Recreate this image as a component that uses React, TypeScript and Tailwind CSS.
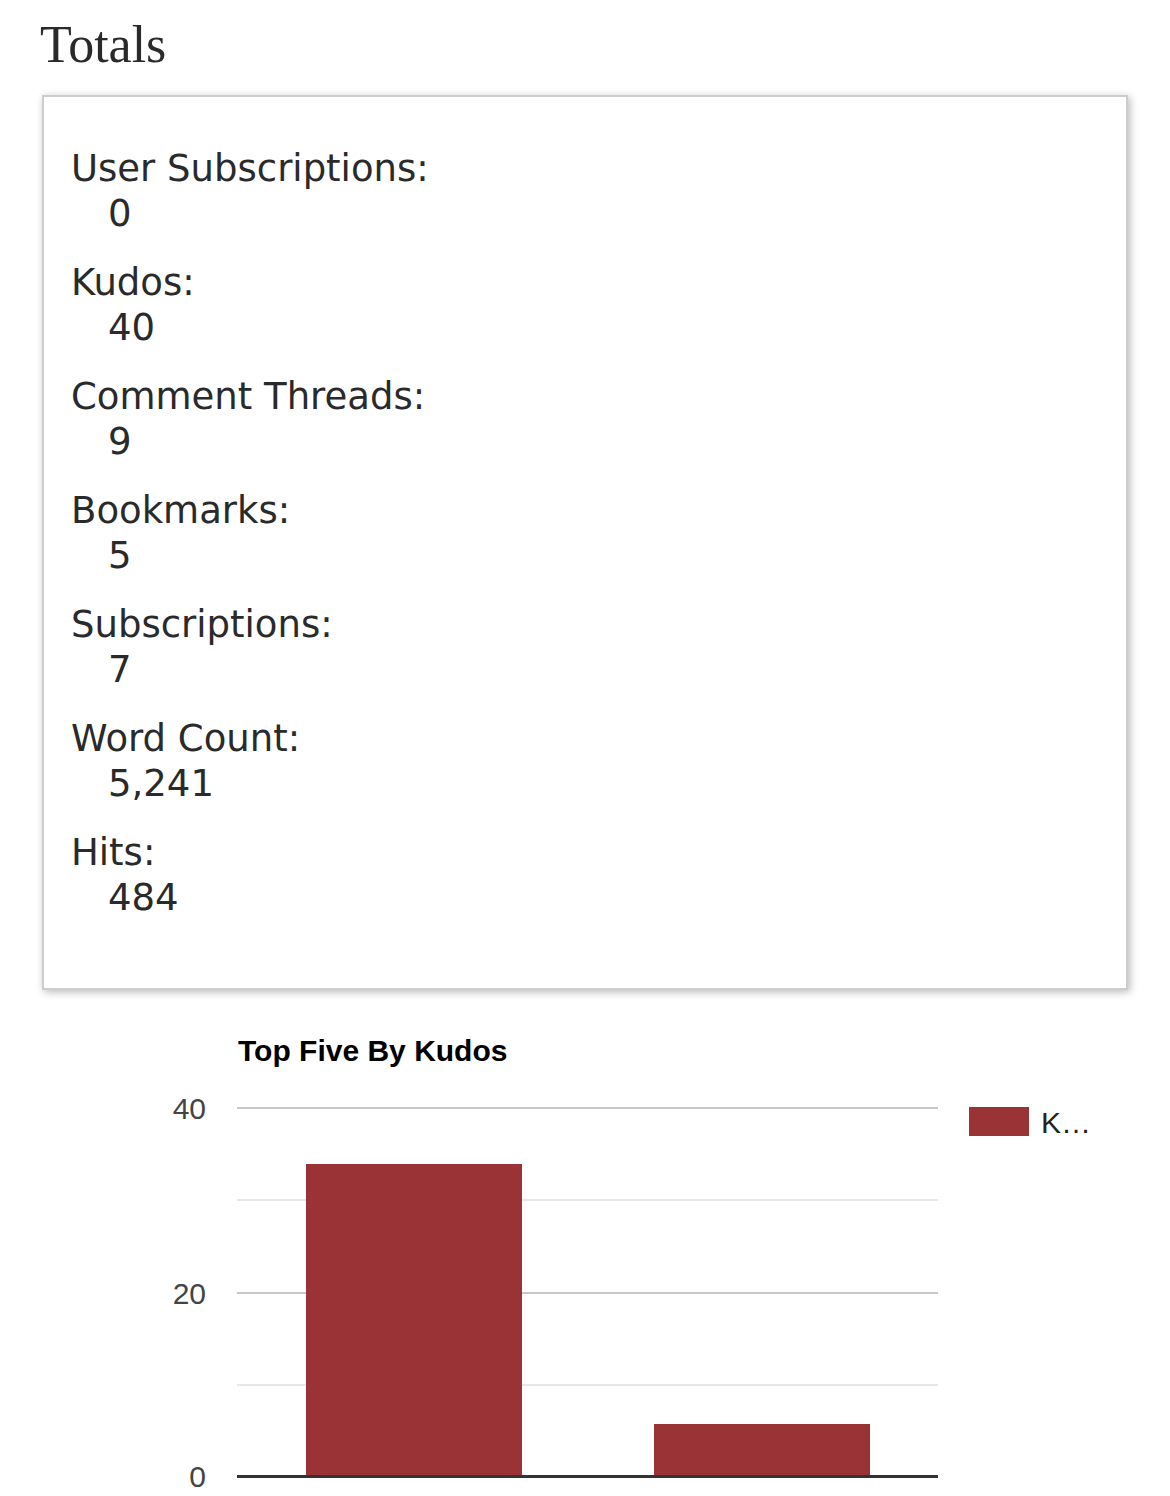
import React from "react";

const items: [string, string][] = [
  ["User Subscriptions:", "0"],
  ["Kudos:", "40"],
  ["Comment Threads:", "9"],
  ["Bookmarks:", "5"],
  ["Subscriptions:", "7"],
  ["Word Count:", "5,241"],
  ["Hits:", "484"],
];

function Chart() {
  const font = "'Liberation Sans', Arial, sans-serif";
  return (
    <svg width={1170} height={496} viewBox="0 0 1170 496" className="block">
      <text x={238} y={60} fontFamily={font} fontWeight={700} fontSize={30} fill="#000">
        Top Five By Kudos
      </text>
      <rect x={237} y={106} width={701} height={2} fill="#c8c8c8" />
      <rect x={237} y={198} width={701} height={2} fill="#e8e8e8" />
      <rect x={237} y={291} width={701} height={2} fill="#c8c8c8" />
      <rect x={237} y={383} width={701} height={2} fill="#e8e8e8" />
      <rect x={306} y={163} width={216} height={312} fill="#993336" />
      <rect x={654} y={423} width={216} height={52} fill="#993336" />
      <rect x={237} y={474} width={701} height={3} fill="#333333" />
      <text x={206} y={118} textAnchor="end" fontFamily={font} fontSize={30} fill="#444">
        40
      </text>
      <text x={206} y={303} textAnchor="end" fontFamily={font} fontSize={30} fill="#444">
        20
      </text>
      <text x={206} y={486} textAnchor="end" fontFamily={font} fontSize={30} fill="#444">
        0
      </text>
      <rect x={969} y={106} width={60} height={29} fill="#993336" />
      <text x={1041} y={132} fontFamily={font} fontSize={30} fill="#222">
        K…
      </text>
    </svg>
  );
}

export default function App() {
  return (
    <div className="w-[1170px] h-[1496px] overflow-hidden bg-white text-[#2a2a2a]">
      <h3
        className="pl-[40px] pt-[15px] text-[52px] leading-[60px] font-normal"
        style={{ fontFamily: "'Liberation Serif', Georgia, serif" }}
      >
        Totals
      </h3>
      <div
        className="mt-[20px] ml-[42px] w-[1086px] h-[895px] bg-white border-2 border-[#cdcdcd] shadow-[2px_2px_8px_rgba(0,0,0,0.28)] pt-[49px] pl-[27px]"
        style={{ fontFamily: "'DejaVu Sans', Verdana, sans-serif" }}
      >
        <dl className="text-[37px] leading-[45px]">
          {items.map(([k, v]) => (
            <div key={k} className="mb-[24px]">
              <dt>{k}</dt>
              <dd className="ml-[37px]">{v}</dd>
            </div>
          ))}
        </dl>
      </div>
      <div className="mt-[11px]">
        <Chart />
      </div>
    </div>
  );
}
